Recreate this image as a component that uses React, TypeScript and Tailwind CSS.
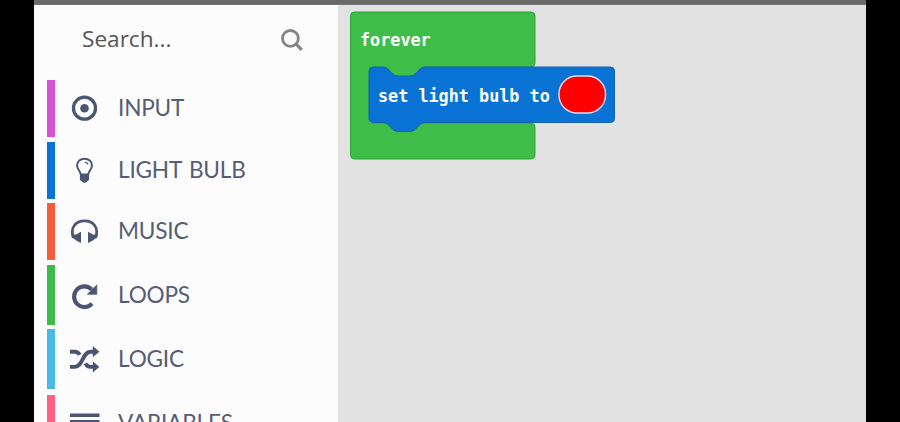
import type { ReactNode } from "react";

const ink = "#4b5572";

const TargetIcon = () => (
  <svg width="30" height="30" viewBox="0 0 30 30" fill="none">
    <circle cx="14.5" cy="14.2" r="11" stroke={ink} strokeWidth="3.3" />
    <circle cx="14.5" cy="14.2" r="4.3" fill={ink} />
  </svg>
);

const BulbIcon = () => (
  <svg width="30" height="30" viewBox="0 0 30 30" fill="none">
    <path
      d="M10.9 18.6C10.3 15.2 7.1 13.1 7.1 9.4C7.1 5.3 10.4 2.7 14.5 2.7C18.6 2.7 21.9 5.3 21.9 9.4C21.9 13.1 18.7 15.2 18.1 18.6"
      stroke={ink}
      strokeWidth="2"
    />
    <path d="M14.8 6.2C16.6 6.3 17.6 7.1 18 8.5" stroke={ink} strokeWidth="1.2" />
    <path d="M9.9 17.4H19.1V23.2Q19 24.9 17.2 25.2Q16.5 26.8 14.5 26.8Q12.5 26.8 11.8 25.2Q10 24.9 9.9 23.2Z" fill={ink} />
  </svg>
);

const HeadphonesIcon = () => (
  <svg width="30" height="30" viewBox="0 0 30 30" fill="none">
    <path d="M3 19C0.5 10.5 5.5 3.9 14.5 3.9C23.5 3.9 28.5 10.5 26 19" stroke={ink} strokeWidth="2.7" />
    <path d="M11 14.8V25.9L6.5 23.8L4 21.8L1.8 20.8L1.1 16.2L3.4 17.8L6 17.6ZM18 14.8V25.9L22.5 23.8L25 21.8L27.2 20.8L27.9 16.2L25.6 17.8L23 17.6Z" fill={ink} />
  </svg>
);

const RepeatIcon = () => (
  <svg width="30" height="30" viewBox="0 0 30 30" fill="none">
    <path d="M21.8 9.5A10.3 10.3 0 1 0 22 23.6" stroke={ink} strokeWidth="4.1" />
    <path d="M26.8 5V14.3H17.4Z" fill={ink} stroke={ink} strokeWidth="0.7" strokeLinejoin="round" />
  </svg>
);

const ShuffleIcon = () => (
  <svg width="30" height="30" viewBox="0 0 30 30" fill="none">
    <path
      d="M0 22.9H4.8C12.8 22.9 12.5 7.7 20.5 7.7H24M0 7.7H4.8C7.1 7.7 8.6 8.9 9.8 10.8M15.3 19.4C16.5 21.6 18.1 22.9 20.5 22.9H24"
      stroke={ink}
      strokeWidth="3.9"
    />
    <path d="M22.8 2.1L29.4 7.7L22.8 13.3ZM22.8 17.3L29.4 22.9L22.8 28.5Z" fill={ink} />
  </svg>
);

const LinesIcon = () => (
  <svg width="30" height="30" viewBox="0 0 30 30" fill={ink}>
    <path d="M0 4.5H29.5V8H0ZM0 11H29.5V14.5H0ZM0 17.5H29.5V21H0Z" />
  </svg>
);

type Category = { name: string; bar: string; row: string; icon: ReactNode };

const categories: Category[] = [
  { name: "INPUT", bar: "bg-[#d454d1]", row: "h-[57px] mb-[5px]", icon: <TargetIcon /> },
  { name: "LIGHT BULB", bar: "bg-[#0873d5]", row: "h-[57px] mb-1", icon: <BulbIcon /> },
  { name: "MUSIC", bar: "bg-[#f45c3c]", row: "h-[57px] mb-[5px]", icon: <HeadphonesIcon /> },
  { name: "LOOPS", bar: "bg-[#3cba4a]", row: "h-[60px] mb-1", icon: <RepeatIcon /> },
  { name: "LOGIC", bar: "bg-[#48b9e6]", row: "h-[60px] mb-1.5", icon: <ShuffleIcon /> },
  { name: "VARIABLES", bar: "bg-[#ff5f80]", row: "h-[57px]", icon: <LinesIcon /> },
];

function Sidebar() {
  return (
    <aside className="flex h-full w-[304px] shrink-0 flex-col overflow-hidden bg-[#fcfcfc] pl-[13px]">
      <div className="flex h-[75px] shrink-0 items-start justify-between pt-[17px] pr-[34px] pl-[35px]">
        <span className="font-['Open_Sans',sans-serif] text-[22.6px] leading-[34px] text-[#555]">Search...</span>
        <svg className="mt-[6px]" width="24" height="24" viewBox="0 0 24 24" fill="none" stroke="#858585">
          <circle cx="10.4" cy="10.4" r="7.9" strokeWidth="2.8" />
          <path d="M15.9 15.9L21.7 21.8" strokeWidth="3.2" />
        </svg>
      </div>
      {categories.map((c) => (
        <div key={c.name} className={`flex shrink-0 items-center ${c.row}`}>
          <div className={`h-full w-2 ${c.bar}`} />
          <div className="ml-[15px] w-[48px]">{c.icon}</div>
          <span className="pb-px font-[Lato,sans-serif] text-[22.6px] leading-[28px] tracking-[-0.2px] [word-spacing:2px] whitespace-nowrap text-[#555d77]">
            {c.name}
          </span>
        </div>
      ))}
    </aside>
  );
}

function Workspace() {
  return (
    <main className="relative flex-1 overflow-hidden bg-[#e2e2e2] font-['DejaVu_Sans_Mono',monospace] text-[16.8px] leading-5 font-bold text-white">
      <svg className="absolute top-0 left-0" width="300" height="170" viewBox="338 5 300 170">
        <path
          d="M354.5 12H531Q535 12 535 16V63Q535 67 531 67H425V80H369V123H531Q535 123 535 127V155Q535 159 531 159H354.5Q350.5 159 350.5 155V16Q350.5 12 354.5 12Z"
          fill="#3fbd49"
          stroke="#2da33a"
        />
        <path
          d="M373 67H383Q386 67 388 69L393 74Q395 76 398 76H410Q413 76 415 74L420 69Q422 67 425 67H610.5Q614.5 67 614.5 71V118.5Q614.5 122.5 610.5 122.5H425Q422 122.5 420 124.5L415 129.5Q413 131.5 410 131.5H398Q395 131.5 393 129.5L388 124.5Q386 122.5 383 122.5H373Q369 122.5 369 118.5V71Q369 67 373 67Z"
          fill="#0873d5"
          stroke="#1662ae"
        />
        <rect x="559" y="76" width="46.5" height="37" rx="18" fill="#ff0000" stroke="#e7dbe9" strokeWidth="1.4" />
      </svg>
      <span className="absolute top-[25px] left-[22px] whitespace-pre">forever</span>
      <span className="absolute top-[81px] left-[40px] whitespace-pre">set light bulb to</span>
    </main>
  );
}

export default function App() {
  return (
    <div className="h-[422px] w-[900px] overflow-hidden bg-black px-[34px]">
      <div className="flex h-full flex-col">
        <div className="h-[5px] shrink-0 border-b border-[#777] bg-[#6a6a6a]" />
        <div className="flex min-h-0 flex-1">
          <Sidebar />
          <Workspace />
        </div>
      </div>
    </div>
  );
}
